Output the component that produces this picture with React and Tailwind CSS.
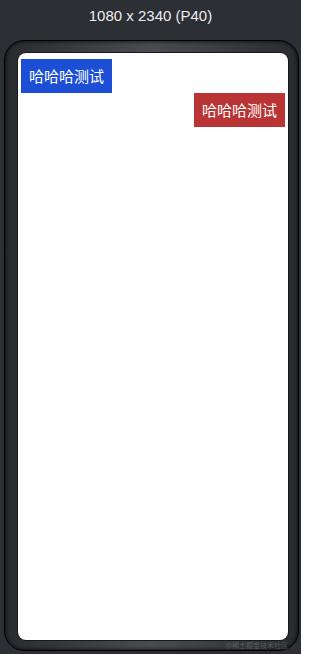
import React from 'react'

const cjk = { fontFamily: '"Noto Sans CJK SC", "Noto Sans", sans-serif' }

function App() {
  return (
    <div className="w-[301px] h-[654px] bg-[#2c2f34] flex flex-col overflow-hidden">
      {/* device label */}
      <div
        className="h-[40px] flex items-center justify-center pb-[8px] text-[15px] text-[#ececec]"
        style={{ fontFamily: '"Liberation Sans", Arial, sans-serif' }}
      >
        1080 x 2340 (P40)
      </div>

      {/* phone frame */}
      <div className="relative ml-[4px] w-[295px] h-[611px] rounded-[20px] border border-black bg-gradient-to-r from-[#2a2b2e] via-[#4a4c50] to-[#2a2b2e] pl-[12px] pr-[9px] pt-[11px] pb-[9px] shadow-[inset_0_0_4px_rgba(0,0,0,0.9)]">
        <div className="w-full h-full rounded-[9px] bg-[#18191b] p-px">
          <div className="w-full h-full rounded-[8px] bg-white flex flex-col items-start pt-[6px] px-[3px]">
            <div
              className="h-[34px] px-[8px] flex items-center bg-[#1c4fd6] text-white text-[15px]"
              style={cjk}
            >
              哈哈哈测试
            </div>
            <div
              className="self-end h-[34px] px-[8px] flex items-center bg-[#b93434] text-white text-[15px]"
              style={cjk}
            >
              哈哈哈测试
            </div>
          </div>
        </div>
        <div
          className="absolute right-[10px] bottom-[0px] text-[7px] leading-[9px] text-[#6a6c70] opacity-70"
          style={cjk}
        >
          @稀土掘金技术社区
        </div>
      </div>
    </div>
  )
}

export default App
